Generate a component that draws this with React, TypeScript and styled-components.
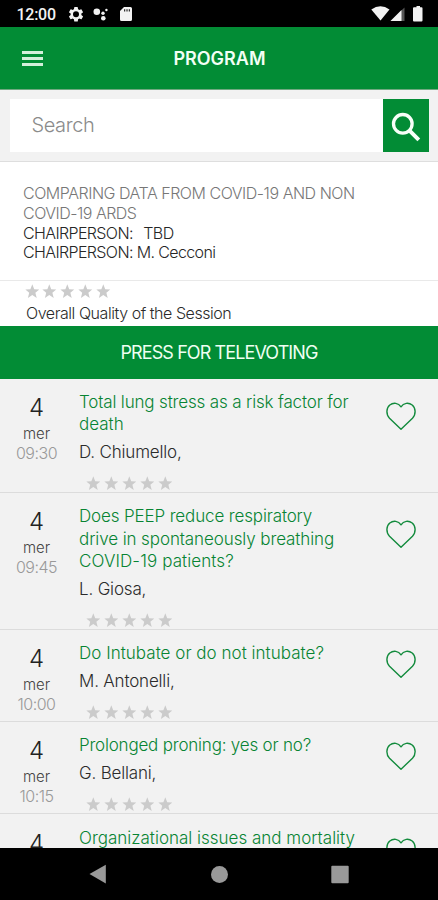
import React from 'react';
import styled, { createGlobalStyle } from 'styled-components';

const GREEN = '#028c35';

const GlobalStyle = createGlobalStyle`
  * { box-sizing: border-box; }
  body { margin: 0; background: #000; }
`;

const Screen = styled.div`
  width: 438px;
  height: 900px;
  display: flex;
  flex-direction: column;
  overflow: hidden;
  background: #f2f2f2;
  font-family: Inter, "Liberation Sans", sans-serif;
  font-weight: 300;
  color: #2b2b2b;
`;

const StatusBar = styled.div`
  flex: none;
  height: 27px;
  background: #000;
  color: #f0f0f0;
`;

const StatusIcons = styled.svg`
  display: block;
`;

const Header = styled.header`
  flex: none;
  height: 63px;
  display: grid;
  grid-template-columns: 64px 1fr 64px;
  align-items: center;
  padding-left: 1px;
  background: ${GREEN};
  border-bottom: 1px solid #71a981;
`;

const MenuButton = styled.div`
  display: flex;
  flex-direction: column;
  gap: 3px;
  width: 21px;
  margin: 1px 0 0 20.5px;
`;

const MenuBar = styled.span`
  height: 3px;
  background: #d3f0da;
`;

const Title = styled.h1`
  margin: 2px 0 0;
  text-align: center;
  font-size: 18px;
  line-height: 24px;
  font-weight: 600;
  color: #f3fff5;
`;

const SearchArea = styled.div`
  flex: none;
  height: 72px;
  display: flex;
  padding: 9px 9px 10px 9.5px;
  border-bottom: 1px solid #dedede;
`;

const SearchField = styled.div`
  flex: 1;
  height: 53px;
  padding-left: 22px;
  background: #fff;
  color: #8b8b8b;
  font-size: 20px;
  line-height: 53px;
  letter-spacing: -0.4px;
`;

const SearchButton = styled.div`
  width: 46px;
  height: 53px;
  background: ${GREEN};
`;

const Session = styled.section`
  flex: none;
  height: 119px;
  padding: 22.2px 23px 0;
  background: #fff;
  border-bottom: 1px solid #e9e9e9;
  font-size: 16px;
  line-height: 19.7px;
`;

const SessionLine = styled.div<{ $muted?: boolean; $spacing?: number }>`
  display: flex;
  gap: 10.5px;
  white-space: pre;
  color: ${(p) => (p.$muted ? '#777' : '#262626')};
  letter-spacing: ${(p) => p.$spacing ?? -0.5}px;
`;

const Quality = styled.section`
  flex: none;
  height: 44.5px;
  padding: 3px 0 0 26px;
  background: #fff;
`;

const QualityStars = styled.div`
  margin-left: -1.5px;
`;

const QualityText = styled.div`
  font-size: 16px;
  line-height: 20px;
  margin-top: 4px;
  letter-spacing: -0.45px;
`;

const StarsRow = styled.div`
  display: flex;
  gap: 3.4px;
  height: 14.5px;
`;

const Banner = styled.div`
  flex: none;
  height: 53px;
  background: ${GREEN};
  color: #effff2;
  text-align: center;
  font-size: 18px;
  font-weight: 400;
  line-height: 53px;
  letter-spacing: -0.9px;
`;

const Talks = styled.main`
  flex: 1;
  min-height: 0;
  overflow: hidden;
`;

const Talk = styled.article<{ $lines: number }>`
  display: grid;
  grid-template-columns: 79px 1fr 52px;
  height: ${(p) => 70.1 + p.$lines * 22.2}px;
  border-bottom: 1px solid #dcdcdc;
`;

const When = styled.div`
  width: 73px;
  padding-top: 15.3px;
  text-align: center;
`;

const Day = styled.div`
  font-size: 24px;
  line-height: 28px;
  color: #222;
`;

const Weekday = styled.div`
  margin-top: 2px;
  font-size: 15px;
  line-height: 20px;
  color: #444;
`;

const Time = styled.div`
  font-size: 16px;
  line-height: 19px;
  color: #999;
  letter-spacing: -0.5px;
`;

const Details = styled.div`
  padding-top: 12.3px;
  display: flex;
  flex-direction: column;
`;

const TalkLine = styled.div<{ $spacing: number }>`
  font-size: 17px;
  line-height: 22.2px;
  white-space: nowrap;
  color: #078433;
  letter-spacing: ${(p) => p.$spacing}px;
`;

const Speaker = styled.div`
  margin-top: 6px;
  font-size: 17px;
  line-height: 22px;
  letter-spacing: -0.18px;
`;

const TalkStars = styled.div`
  margin: auto 0 1.5px 6.8px;
`;

const Favourite = styled.div<{ $lines: number }>`
  padding-top: ${(p) => 16.2 + p.$lines * 3.7}px;
`;

const NavBar = styled.nav`
  flex: none;
  height: 52.5px;
  background: #000;
`;

const Star = () => (
  <svg width="14.6" height="14.5" viewBox="0 0 24 24">
    <path
      fill="#cbcbcb"
      d="M12 0.5l3.2 8 8.3.5-6.4 5.4 2.2 8.6L12 18.4 4.7 23l2.2-8.6L.5 9l8.3-.5z"
    />
  </svg>
);

const Stars = () => (
  <StarsRow>
    {[0, 1, 2, 3, 4].map((i) => (
      <Star key={i} />
    ))}
  </StarsRow>
);

const Heart = () => (
  <svg width="30" height="29" viewBox="0 0 30 29" fill="none" stroke="#138b3d" strokeWidth="1.4">
    <path
      strokeLinejoin="round"
      d="M15 27.3L3.5 16.2C-.2 12.400.2 6 3.800 3 7.400.2 12.400.8 15 4.800 17.600.8 22.600.2 26.200 3c3.600 3 4 9.400.3 13.200z"
    />
  </svg>
);

type TalkData = { time?: string; lines: [string, number][]; speaker?: string };

const talks: TalkData[] = [
  {
    time: '09:30',
    lines: [['Total lung stress as a risk factor for', -0.16], ['death', 0]],
    speaker: 'D. Chiumello,',
  },
  {
    time: '09:45',
    lines: [
      ['Does PEEP reduce respiratory', -0.14],
      ['drive in spontaneously breathing', -0.1],
      ['COVID-19 patients?', 0.1],
    ],
    speaker: 'L. Giosa,',
  },
  { time: '10:00', lines: [['Do Intubate or do not intubate?', 0.03]], speaker: 'M. Antonelli,' },
  { time: '10:15', lines: [['Prolonged proning: yes or no?', -0.2]], speaker: 'G. Bellani,' },
  { lines: [['Organizational issues and mortality', 0], ['', 0]] },
];

export default function App() {
  return (
    <Screen>
      <GlobalStyle />
      <StatusBar>
        <StatusIcons width="438" height="27" viewBox="0 0 438 27" fill="#f2f2f2">
          <text x="16.5" y="20" fontFamily="Roboto, sans-serif" fontSize="16" fontWeight="500" textLength="39.5">
            12:00
          </text>
          <g transform="translate(67 5.3) scale(.75)">
            <path
              fillRule="evenodd"
              d="M19.140 12.940c.04-.3.060-.61.060-.94s-.02-.64-.07-.94l2.030-1.580a.49.49 0 0 0 .12-.61l-1.920-3.320a.49.49 0 0 0-.59-.22l-2.390.96a7 7 0 0 0-1.620-.94l-.36-2.540A.48.48 0 0 0 13.920 2.400h-3.840a.47.47 0 0 0-.47.41l-.36 2.540a7.300 7.300 0 0 0-1.620.94l-2.390-.96a.47.47 0 0 0-.59.22L2.740 8.870a.47.47 0 0 0 .12.610l2.030 1.580a6 6 0 0 0 0 1.880l-2.030 1.580a.49.49 0 0 0-.12.610l1.920 3.320c.12.22.37.29.59.22l2.390-.96c.5.38 1.030.7 1.620.94l.36 2.540c.05.24.24.41.480.41h3.840c.24 0 .44-.17.470-.41l.36-2.540a7.300 7.300 0 0 0 1.620-.94l2.390.96c.22.080.47 0 .59-.22l1.920-3.320a.47.47 0 0 0-.12-.61zM12 16a4 4 0 1 1 0-8 4 4 0 0 1 0 8z"
            />
          </g>
          <circle cx="96.8" cy="11.8" r="3.3" />
          <circle cx="103" cy="13.3" r="1.7" />
          <circle cx="106.4" cy="10" r="1.2" />
          <circle cx="103.3" cy="18.300" r="2.3" />
          <path
            fillRule="evenodd"
            d="M124 7h6.500q1.500 0 1.500 1.500v11q0 1.500-1.500 1.500h-9q-1.500 0-1.500-1.500V11zm.2 2.200v2.200h1v-2.200zm2.300 0v2.200h1v-2.200zm2.300 0v2.200h1v-2.200z"
          />
          <path d="M371.3 9.6Q380.5 2.8 389.5 9.6L380.5 20.5z" />
          <path d="M390.5 21L404.5 7.5V21z" fill="#555" />
          <path d="M390.5 21L401.5 10V21z" />
          <path d="M415 7.300h1.500V6h3.500v1.300h1.500q1 0 1 1V20.500q0 1-1 1H414q-1 0-1-1V8.300q0-1 1-1z" />
        </StatusIcons>
      </StatusBar>

      <Header>
        <MenuButton>
          <MenuBar />
          <MenuBar />
          <MenuBar />
        </MenuButton>
        <Title>PROGRAM</Title>
      </Header>

      <SearchArea>
        <SearchField>Search</SearchField>
        <SearchButton>
          <svg width="46" height="53" viewBox="0 0 46 53" fill="none" stroke="#f7fff8">
            <circle cx="19.8" cy="24.800" r="9.3" strokeWidth="3.3" />
            <path d="M26.300 31.300L35.800 40.800" strokeWidth="4" />
          </svg>
        </SearchButton>
      </SearchArea>

      <Session>
        <SessionLine $muted $spacing={-0.47}>COMPARING DATA FROM COVID-19 AND NON</SessionLine>
        <SessionLine $muted>COVID-19 ARDS</SessionLine>
        <SessionLine $spacing={-0.62}>
          <span>CHAIRPERSON:</span>
          <span>TBD</span>
        </SessionLine>
        <SessionLine $spacing={-0.62}>CHAIRPERSON: M. Cecconi</SessionLine>
      </Session>

      <Quality>
        <QualityStars>
          <Stars />
        </QualityStars>
        <QualityText>Overall Quality of the Session</QualityText>
      </Quality>

      <Banner>PRESS FOR TELEVOTING</Banner>

      <Talks>
        {talks.map((t, i) => (
          <Talk key={i} $lines={t.lines.length}>
            <When>
              <Day>4</Day>
              {t.time && <Weekday>mer</Weekday>}
              {t.time && <Time>{t.time}</Time>}
            </When>
            <Details>
              {t.lines.map(([text, spacing]) => (
                <TalkLine key={text} $spacing={spacing}>
                  {text}
                </TalkLine>
              ))}
              {t.speaker && <Speaker>{t.speaker}</Speaker>}
              <TalkStars>
                <Stars />
              </TalkStars>
            </Details>
            <Favourite $lines={t.lines.length}>
              <Heart />
            </Favourite>
          </Talk>
        ))}
      </Talks>

      <NavBar>
        <svg width="438" height="52" viewBox="0 0 438 52" fill="#999">
          <path d="M89.5 26L105.8 16.8V35.5z" />
          <circle cx="219.5" cy="26.5" r="8.5" />
          <rect x="331.3" y="17.8" width="17.4" height="17.4" rx="1" />
        </svg>
      </NavBar>
    </Screen>
  );
}
